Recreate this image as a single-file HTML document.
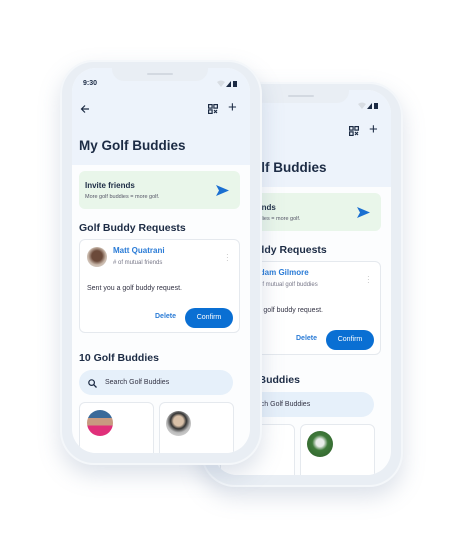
<!DOCTYPE html>
<html><head><meta charset="utf-8"><style>
*{margin:0;padding:0;box-sizing:border-box}
body{width:465px;height:537px;background:#fff;position:relative;overflow:hidden;font-family:"Liberation Sans",sans-serif;color:#1c2b44}
.frame{position:absolute;width:202px;height:405px;border-radius:34px;background:#e9eef4;box-shadow:0 10px 22px rgba(120,140,170,.25),inset 0 0 0 2px #f4f7fa}
.screen{position:absolute;left:12px;top:8px;width:178px;height:385px;border-radius:24px;background:#fcfdfe;overflow:hidden}
.hdr{position:absolute;left:0;top:0;width:178px;height:97px;background:#edf3fb}
.notch{position:absolute;left:40px;top:0;width:96px;height:13px;background:#e9eef4;border-radius:0 0 12px 12px}
.notch:after{content:"";position:absolute;left:35px;top:5px;width:26px;height:2px;border-radius:1px;background:#d3d9e1}
.a{position:absolute;white-space:nowrap}
.card{position:absolute;border:1px solid #e5e9ee;border-radius:6px;background:#fff}
.av{position:absolute;border-radius:50%}
.t{font-size:13.5px;font-weight:bold}
.h{font-size:10.5px;font-weight:bold}
</style></head><body>

<!-- back phone -->
<div class="frame" style="left:201px;top:82px">
 <div class="screen">
  <div class="hdr"></div>
  <div class="notch"></div>
  <svg class="a" style="left:145px;top:12px" width="22" height="8"><path d="M0 2 L4 7 L8 2 Q4 -1 0 2Z" fill="#d8dde3"/><path d="M9 7 L14 7 L14 1Z" fill="#1c2b44"/><rect x="16" y="1" width="4" height="6" fill="#1c2b44"/></svg>
  <svg class="a" style="left:136px;top:36px" width="10" height="10"><g fill="none" stroke="#1c2b44" stroke-width="1.2"><rect x="0.6" y="0.6" width="3.5" height="3.5"/><rect x="5.9" y="0.6" width="3.5" height="3.5"/><rect x="0.6" y="5.9" width="3.5" height="3.5"/><path d="M6 6l3 3M9 6l-3 3"/></g></svg>
  <div class="a" style="left:156px;top:31px;font-size:15px;font-weight:300">+</div>
  <div class="a t" style="left:7px;top:70px">My Golf Buddies</div>
  <div class="a" style="left:7px;top:103px;width:161px;height:38px;background:#e9f6ea;border-radius:6px"></div>
  <div class="a" style="left:13px;top:113px;font-size:8px;font-weight:bold">Invite friends</div>
  <div class="a" style="left:13px;top:126px;font-size:5.5px;color:#556">More golf buddies = more golf.</div>
  <svg class="a" style="left:144px;top:117px" width="13" height="11"><path d="M0 0 L13 5.5 L0 11 L3 5.5Z" fill="#1a6fd1"/></svg>
  <div class="a h" style="left:7px;top:154px">Golf Buddy Requests</div>
  <div class="card" style="left:7px;top:171px;width:161px;height:94px"></div>
  <div class="av" style="left:15px;top:179px;width:20px;height:20px;background:#9a8a80"></div>
  <div class="a" style="left:41px;top:178px;font-size:8px;color:#2a7bd6;font-weight:bold">Adam Gilmore</div>
  <div class="a" style="left:41px;top:192px;font-size:6px;color:#778">#  of mutual golf buddies</div>
  <div class="a" style="left:154px;top:185px;font-size:8px;color:#bbb;line-height:3px">·<br>·<br>·</div>
  <div class="a" style="left:15px;top:217px;font-size:7px;color:#334">Sent you a golf buddy request.</div>
  <div class="a" style="left:83px;top:245px;font-size:7px;color:#2a7bd6;font-weight:bold">Delete</div>
  <div class="a" style="left:113px;top:240px;width:48px;height:20px;border-radius:10px;background:#0a6fd3;color:#fff;font-size:7px;text-align:center;line-height:20px">Confirm</div>
  <div class="a h" style="left:7px;top:284px">10 Golf Buddies</div>
  <div class="a" style="left:7px;top:302px;width:154px;height:25px;border-radius:13px;background:#e6f0fa"></div>
  <div class="a" style="left:33px;top:311px;font-size:7px;color:#334">Search Golf Buddies</div>
  <div class="card" style="left:7px;top:334px;width:75px;height:60px"></div>
  <div class="card" style="left:87px;top:334px;width:75px;height:60px"></div>
  <div class="av" style="left:94px;top:341px;width:26px;height:26px;background:radial-gradient(circle at 50% 45%,#e8ece8 0 20%,#3f7a3a 40%,#2e5e2a)"></div>
 </div>
</div>

<!-- front phone -->
<div class="frame" style="left:60px;top:60px">
 <div class="screen">
  <div class="hdr"></div>
  <div class="notch"></div>
  <div class="a" style="left:11px;top:12px;font-size:7px;font-weight:bold">9:30</div>
  <svg class="a" style="left:145px;top:12px" width="22" height="8"><path d="M0 2 L4 7 L8 2 Q4 -1 0 2Z" fill="#d8dde3"/><path d="M9 7 L14 7 L14 1Z" fill="#1c2b44"/><rect x="16" y="1" width="4" height="6" fill="#1c2b44"/></svg>
  <svg class="a" style="left:8px;top:36px" width="10" height="10"><path d="M9 5H1.5M5 1.5L1.5 5L5 8.5" fill="none" stroke="#1c2b44" stroke-width="1.2"/></svg>
  <svg class="a" style="left:136px;top:36px" width="10" height="10"><g fill="none" stroke="#1c2b44" stroke-width="1.2"><rect x="0.6" y="0.6" width="3.5" height="3.5"/><rect x="5.9" y="0.6" width="3.5" height="3.5"/><rect x="0.6" y="5.9" width="3.5" height="3.5"/><path d="M6 6l3 3M9 6l-3 3"/></g></svg>
  <div class="a" style="left:156px;top:31px;font-size:15px;font-weight:300">+</div>
  <div class="a t" style="left:7px;top:70px">My Golf Buddies</div>
  <div class="a" style="left:7px;top:103px;width:161px;height:38px;background:#e9f6ea;border-radius:6px"></div>
  <div class="a" style="left:13px;top:113px;font-size:8px;font-weight:bold">Invite friends</div>
  <div class="a" style="left:13px;top:126px;font-size:5.5px;color:#556">More golf buddies = more golf.</div>
  <svg class="a" style="left:144px;top:117px" width="13" height="11"><path d="M0 0 L13 5.5 L0 11 L3 5.5Z" fill="#1a6fd1"/></svg>
  <div class="a h" style="left:7px;top:154px">Golf Buddy Requests</div>
  <div class="card" style="left:7px;top:171px;width:161px;height:94px"></div>
  <div class="av" style="left:15px;top:179px;width:20px;height:20px;background:radial-gradient(circle at 50% 45%,#6b4a3a 0 35%,#c9b8aa 60%,#ddd)"></div>
  <div class="a" style="left:41px;top:178px;font-size:8px;color:#2a7bd6;font-weight:bold">Matt Quatrani</div>
  <div class="a" style="left:41px;top:192px;font-size:6px;color:#778"># of mutual friends</div>
  <div class="a" style="left:154px;top:185px;font-size:8px;color:#bbb;line-height:3px">·<br>·<br>·</div>
  <div class="a" style="left:15px;top:217px;font-size:7px;color:#334">Sent you a golf buddy request.</div>
  <div class="a" style="left:83px;top:245px;font-size:7px;color:#2a7bd6;font-weight:bold">Delete</div>
  <div class="a" style="left:113px;top:240px;width:48px;height:20px;border-radius:10px;background:#0a6fd3;color:#fff;font-size:7px;text-align:center;line-height:20px">Confirm</div>
  <div class="a h" style="left:7px;top:284px">10 Golf Buddies</div>
  <div class="a" style="left:7px;top:302px;width:154px;height:25px;border-radius:13px;background:#e6f0fa"></div>
  <svg class="a" style="left:16px;top:311px" width="9" height="9"><circle cx="3.6" cy="3.6" r="2.8" fill="none" stroke="#1c2b44" stroke-width="1.2"/><path d="M5.6 5.6L8.5 8.5" stroke="#1c2b44" stroke-width="1.3"/></svg>
  <div class="a" style="left:33px;top:311px;font-size:7px;color:#334">Search Golf Buddies</div>
  <div class="card" style="left:7px;top:334px;width:75px;height:60px"></div>
  <div class="card" style="left:87px;top:334px;width:75px;height:60px"></div>
  <div class="av" style="left:15px;top:342px;width:26px;height:26px;background:linear-gradient(#3a6a9a 0 30%,#c89a80 30% 60%,#e0307a 60%)"></div>
  <div class="av" style="left:94px;top:343px;width:25px;height:25px;background:radial-gradient(circle at 50% 40%,#d8c0a8 0 25%,#333 40%,#bbb 60%,#e5e5e5)"></div>
 </div>
</div>
</body></html>
